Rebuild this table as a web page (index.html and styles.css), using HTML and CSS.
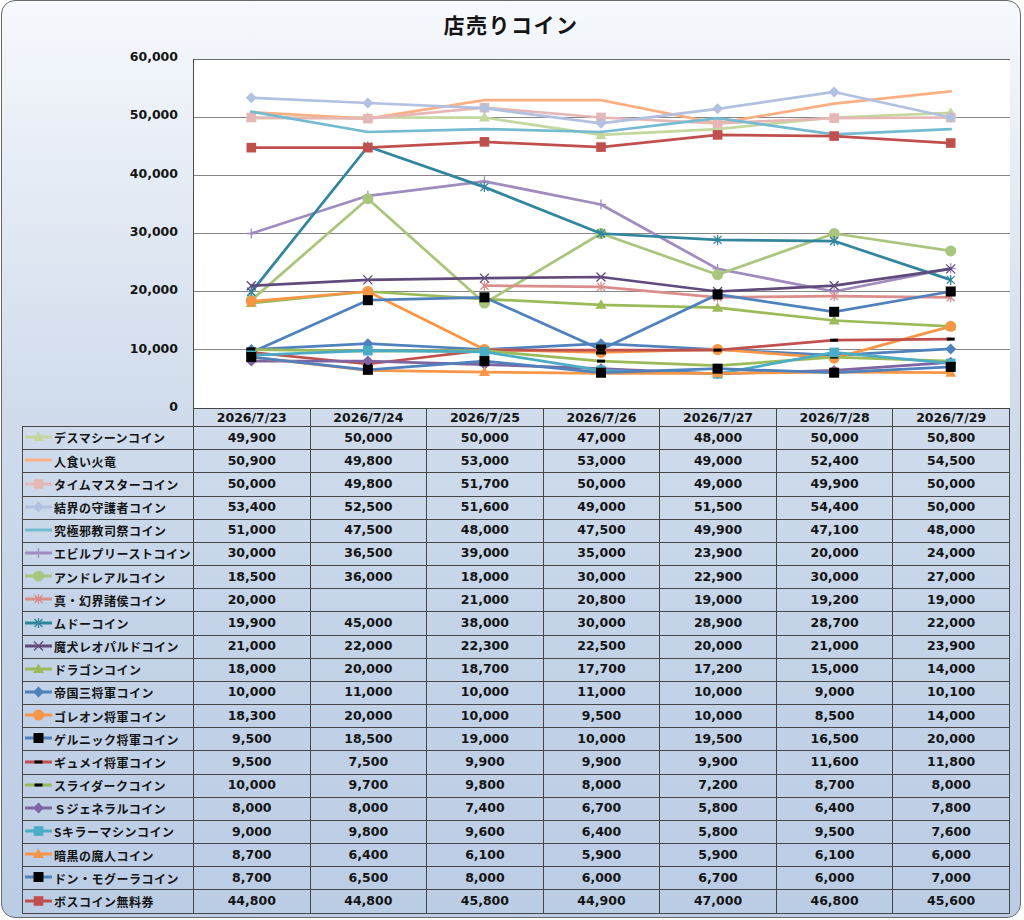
FILE: index.html
```html
<!DOCTYPE html>
<html lang="ja">
<head>
<meta charset="utf-8">
<title>店売りコイン</title>
<link rel="stylesheet" href="styles.css">
</head>
<body>
<div class="frame">
  <h1 class="title">店売りコイン</h1>
  <div class="chart-row">
    <div class="yaxis">
      <span>60,000</span><span>50,000</span><span>40,000</span><span>30,000</span><span>20,000</span><span>10,000</span><span>0</span>
    </div>
    <svg class="plot" id="plot" width="817" height="349" viewBox="0 0 817 349"></svg>
  </div>
  <table class="data">
    <colgroup><col class="c-label"><col><col><col><col><col><col><col></colgroup>
    <thead>
      <tr><th class="corner"></th><th>2026/7/23</th><th>2026/7/24</th><th>2026/7/25</th><th>2026/7/26</th><th>2026/7/27</th><th>2026/7/28</th><th>2026/7/29</th></tr>
    </thead>
    <tbody>
      <tr><th class="name"><svg class="key" data-i="0" width="27" height="12"></svg><span>デスマシーンコイン</span></th><td>49,900</td><td>50,000</td><td>50,000</td><td>47,000</td><td>48,000</td><td>50,000</td><td>50,800</td></tr>
      <tr><th class="name"><svg class="key" data-i="1" width="27" height="12"></svg><span>人食い火竜</span></th><td>50,900</td><td>49,800</td><td>53,000</td><td>53,000</td><td>49,000</td><td>52,400</td><td>54,500</td></tr>
      <tr><th class="name"><svg class="key" data-i="2" width="27" height="12"></svg><span>タイムマスターコイン</span></th><td>50,000</td><td>49,800</td><td>51,700</td><td>50,000</td><td>49,000</td><td>49,900</td><td>50,000</td></tr>
      <tr><th class="name"><svg class="key" data-i="3" width="27" height="12"></svg><span>結界の守護者コイン</span></th><td>53,400</td><td>52,500</td><td>51,600</td><td>49,000</td><td>51,500</td><td>54,400</td><td>50,000</td></tr>
      <tr><th class="name"><svg class="key" data-i="4" width="27" height="12"></svg><span>究極邪教司祭コイン</span></th><td>51,000</td><td>47,500</td><td>48,000</td><td>47,500</td><td>49,900</td><td>47,100</td><td>48,000</td></tr>
      <tr><th class="name"><svg class="key" data-i="5" width="27" height="12"></svg><span>エビルプリーストコイン</span></th><td>30,000</td><td>36,500</td><td>39,000</td><td>35,000</td><td>23,900</td><td>20,000</td><td>24,000</td></tr>
      <tr><th class="name"><svg class="key" data-i="6" width="27" height="12"></svg><span>アンドレアルコイン</span></th><td>18,500</td><td>36,000</td><td>18,000</td><td>30,000</td><td>22,900</td><td>30,000</td><td>27,000</td></tr>
      <tr><th class="name"><svg class="key" data-i="7" width="27" height="12"></svg><span>真・幻界諸侯コイン</span></th><td>20,000</td><td></td><td>21,000</td><td>20,800</td><td>19,000</td><td>19,200</td><td>19,000</td></tr>
      <tr><th class="name"><svg class="key" data-i="8" width="27" height="12"></svg><span>ムドーコイン</span></th><td>19,900</td><td>45,000</td><td>38,000</td><td>30,000</td><td>28,900</td><td>28,700</td><td>22,000</td></tr>
      <tr><th class="name"><svg class="key" data-i="9" width="27" height="12"></svg><span>魔犬レオパルドコイン</span></th><td>21,000</td><td>22,000</td><td>22,300</td><td>22,500</td><td>20,000</td><td>21,000</td><td>23,900</td></tr>
      <tr><th class="name"><svg class="key" data-i="10" width="27" height="12"></svg><span>ドラゴンコイン</span></th><td>18,000</td><td>20,000</td><td>18,700</td><td>17,700</td><td>17,200</td><td>15,000</td><td>14,000</td></tr>
      <tr><th class="name"><svg class="key" data-i="11" width="27" height="12"></svg><span>帝国三将軍コイン</span></th><td>10,000</td><td>11,000</td><td>10,000</td><td>11,000</td><td>10,000</td><td>9,000</td><td>10,100</td></tr>
      <tr><th class="name"><svg class="key" data-i="12" width="27" height="12"></svg><span>ゴレオン将軍コイン</span></th><td>18,300</td><td>20,000</td><td>10,000</td><td>9,500</td><td>10,000</td><td>8,500</td><td>14,000</td></tr>
      <tr><th class="name"><svg class="key" data-i="13" width="27" height="12"></svg><span>ゲルニック将軍コイン</span></th><td>9,500</td><td>18,500</td><td>19,000</td><td>10,000</td><td>19,500</td><td>16,500</td><td>20,000</td></tr>
      <tr><th class="name"><svg class="key" data-i="14" width="27" height="12"></svg><span>ギュメイ将軍コイン</span></th><td>9,500</td><td>7,500</td><td>9,900</td><td>9,900</td><td>9,900</td><td>11,600</td><td>11,800</td></tr>
      <tr><th class="name"><svg class="key" data-i="15" width="27" height="12"></svg><span>スライダークコイン</span></th><td>10,000</td><td>9,700</td><td>9,800</td><td>8,000</td><td>7,200</td><td>8,700</td><td>8,000</td></tr>
      <tr><th class="name"><svg class="key" data-i="16" width="27" height="12"></svg><span>Ｓジェネラルコイン</span></th><td>8,000</td><td>8,000</td><td>7,400</td><td>6,700</td><td>5,800</td><td>6,400</td><td>7,800</td></tr>
      <tr><th class="name"><svg class="key" data-i="17" width="27" height="12"></svg><span>Sキラーマシンコイン</span></th><td>9,000</td><td>9,800</td><td>9,600</td><td>6,400</td><td>5,800</td><td>9,500</td><td>7,600</td></tr>
      <tr><th class="name"><svg class="key" data-i="18" width="27" height="12"></svg><span>暗黒の魔人コイン</span></th><td>8,700</td><td>6,400</td><td>6,100</td><td>5,900</td><td>5,900</td><td>6,100</td><td>6,000</td></tr>
      <tr><th class="name"><svg class="key" data-i="19" width="27" height="12"></svg><span>ドン・モグーラコイン</span></th><td>8,700</td><td>6,500</td><td>8,000</td><td>6,000</td><td>6,700</td><td>6,000</td><td>7,000</td></tr>
      <tr><th class="name"><svg class="key" data-i="20" width="27" height="12"></svg><span>ボスコイン無料券</span></th><td>44,800</td><td>44,800</td><td>45,800</td><td>44,900</td><td>47,000</td><td>46,800</td><td>45,600</td></tr>
    </tbody>
  </table>
</div>
<script src="script.js"></script>
</body>
</html>
```

FILE: styles.css
```css
html, body {
  margin: 0;
  padding: 0;
  background: #ffffff;
}

.frame {
  box-sizing: border-box;
  width: 1020px;
  height: 918px;
  margin-left: 1px;
  border: 1px solid #6a6a6a;
  border-radius: 14px;
  background: linear-gradient(180deg, #f6f9fd 0%, #e3eaf4 22%, #d0dcec 45%, #c3d3e8 70%, #bbcde5 100%);
  font-family: "DejaVu Sans", "Noto Sans CJK JP", sans-serif;
  color: #141414;
}

.title {
  margin: 0;
  height: 48px;
  line-height: 47px;
  text-align: center;
  font-family: "Noto Sans CJK JP", sans-serif;
  font-size: 21px;
  font-weight: 700;
  letter-spacing: 1.5px;
  color: #141414;
}

.chart-row {
  display: flex;
  height: 359px;
}

.yaxis {
  box-sizing: border-box;
  width: 191px;
  height: 366px;
  flex: none;
  padding-right: 15px;
  display: flex;
  flex-direction: column;
  justify-content: space-between;
  align-items: flex-end;
  font-size: 12.5px;
  font-weight: 700;
  line-height: 16px;
}

.plot {
  flex: none;
  margin-top: 10px;
  background: #ffffff;
  display: block;
}

.data {
  margin-left: 20px;
  width: 988px;
  table-layout: fixed;
  border-collapse: collapse;
  font-size: 12.5px;
  font-weight: 700;
}

.c-label {
  width: 171px;
}

.data th,
.data td {
  border: 1px solid #474747;
  padding: 0;
  text-align: center;
  white-space: nowrap;
  overflow: hidden;
}

.data tbody td,
.data tbody th {
  padding-bottom: 2px;
}

.data thead tr {
  height: 18px;
}

.data thead th {
  line-height: 16px;
}

.data tbody tr {
  height: 23.18px;
}

.data th.corner {
  border: none;
}

.data th.name {
  text-align: left;
  padding-left: 2px;
  font-family: "Noto Sans CJK JP", sans-serif;
  font-size: 12px;
  letter-spacing: 0.5px;
}

.name .key {
  display: inline-block;
  vertical-align: middle;
  margin-right: 2px;
  margin-top: -2px;
}

.name span {
  vertical-align: middle;
}
```

FILE: script.js
```javascript
const SERIES = [
  { c: '#c4d79d', m: 'tri',  d: [49900, 50000, 50000, 47000, 48000, 50000, 50800] },
  { c: '#fbb084', m: null,   d: [50900, 49800, 53000, 53000, 49000, 52400, 54500] },
  { c: '#e5b8b7', m: 'sq',   d: [50000, 49800, 51700, 50000, 49000, 49900, 50000] },
  { c: '#b2c1df', m: 'dia',  d: [53400, 52500, 51600, 49000, 51500, 54400, 50000] },
  { c: '#74bad1', m: null,   d: [51000, 47500, 48000, 47500, 49900, 47100, 48000] },
  { c: '#a18cbf', m: 'plus', d: [30000, 36500, 39000, 35000, 23900, 20000, 24000] },
  { c: '#aac57d', m: 'circ', d: [18500, 36000, 18000, 30000, 22900, 30000, 27000] },
  { c: '#d98e8c', m: 'star', d: [20000, null, 21000, 20800, 19000, 19200, 19000] },
  { c: '#31859c', m: 'star', d: [19900, 45000, 38000, 30000, 28900, 28700, 22000] },
  { c: '#604a7b', m: 'x',    d: [21000, 22000, 22300, 22500, 20000, 21000, 23900] },
  { c: '#9bbb59', m: 'tri',  d: [18000, 20000, 18700, 17700, 17200, 15000, 14000] },
  { c: '#4f81bd', m: 'dia',  d: [10000, 11000, 10000, 11000, 10000, 9000, 10100] },
  { c: '#f79646', m: 'circ', d: [18300, 20000, 10000, 9500, 10000, 8500, 14000] },
  { c: '#4f81bd', m: 'bsq',  d: [9500, 18500, 19000, 10000, 19500, 16500, 20000] },
  { c: '#c0504d', m: 'dash', d: [9500, 7500, 9900, 9900, 9900, 11600, 11800] },
  { c: '#9bbb59', m: 'dash', d: [10000, 9700, 9800, 8000, 7200, 8700, 8000] },
  { c: '#8064a2', m: 'dia',  d: [8000, 8000, 7400, 6700, 5800, 6400, 7800] },
  { c: '#4bacc6', m: 'sq',   d: [9000, 9800, 9600, 6400, 5800, 9500, 7600] },
  { c: '#f79646', m: 'tri',  d: [8700, 6400, 6100, 5900, 5900, 6100, 6000] },
  { c: '#4f81bd', m: 'bsq',  d: [8700, 6500, 8000, 6000, 6700, 6000, 7000] },
  { c: '#c0504d', m: 'sq',   d: [44800, 44800, 45800, 44900, 47000, 46800, 45600] }
];

const X0 = 58.3;
const DX = 116.57;
const px = i => X0 + i * DX;
const py = v => 0.5 + (60000 - v) * 0.0058;

function marker(type, x, y, c) {
  const f = n => n.toFixed(2);
  switch (type) {
    case 'tri':
      return `<polygon points="${f(x)},${f(y - 5.5)} ${f(x + 5.5)},${f(y + 4)} ${f(x - 5.5)},${f(y + 4)}" fill="${c}"/>`;
    case 'sq':
      return `<rect x="${f(x - 4.8)}" y="${f(y - 4.8)}" width="9.6" height="9.6" fill="${c}"/>`;
    case 'dia':
      return `<polygon points="${f(x)},${f(y - 5.5)} ${f(x + 5.5)},${f(y)} ${f(x)},${f(y + 5.5)} ${f(x - 5.5)},${f(y)}" fill="${c}"/>`;
    case 'plus':
      return `<path d="M${f(x - 5)} ${f(y)}H${f(x + 5)}M${f(x)} ${f(y - 5)}V${f(y + 5)}" stroke="${c}" stroke-width="1.3" fill="none"/>`;
    case 'circ':
      return `<circle cx="${f(x)}" cy="${f(y)}" r="5.5" fill="${c}"/>`;
    case 'star':
      return `<path d="M${f(x - 4)} ${f(y - 4)}L${f(x + 4)} ${f(y + 4)}M${f(x + 4)} ${f(y - 4)}L${f(x - 4)} ${f(y + 4)}M${f(x)} ${f(y - 5)}V${f(y + 5)}" stroke="${c}" stroke-width="1.3" fill="none"/>`;
    case 'x':
      return `<path d="M${f(x - 4.5)} ${f(y - 4.5)}L${f(x + 4.5)} ${f(y + 4.5)}M${f(x + 4.5)} ${f(y - 4.5)}L${f(x - 4.5)} ${f(y + 4.5)}" stroke="${c}" stroke-width="1.3" fill="none"/>`;
    case 'bsq':
      return `<rect x="${f(x - 5)}" y="${f(y - 5)}" width="10" height="10" fill="#000"/>`;
    case 'dash':
      return `<rect x="${f(x - 4)}" y="${f(y - 1.5)}" width="8" height="3" fill="#000"/>`;
    default:
      return '';
  }
}

function drawPlot() {
  const svg = document.getElementById('plot');
  let out = '';
  for (let k = 1; k <= 5; k++) {
    const y = Math.round(py(k * 10000) - 0.5) + 0.5;
    out += `<line x1="0" x2="817" y1="${y}" y2="${y}" stroke="#858585" stroke-width="1"/>`;
  }
  out += `<line x1="0" x2="817" y1="0.5" y2="0.5" stroke="#6a6a6a" stroke-width="1"/>`;
  out += `<line x1="0.5" x2="0.5" y1="0" y2="349" stroke="#4a4a4a" stroke-width="1"/>`;

  SERIES.forEach(s => {
    let seg = [];
    const segs = [];
    s.d.forEach((v, i) => {
      if (v === null) {
        if (seg.length) segs.push(seg);
        seg = [];
      } else {
        seg.push(`${px(i).toFixed(2)},${py(v).toFixed(2)}`);
      }
    });
    if (seg.length) segs.push(seg);
    segs.forEach(p => {
      if (p.length > 1) {
        out += `<polyline points="${p.join(' ')}" fill="none" stroke="${s.c}" stroke-width="2.75" stroke-linejoin="round" stroke-linecap="round"/>`;
      }
    });
    if (s.m) {
      s.d.forEach((v, i) => {
        if (v !== null) out += marker(s.m, px(i), py(v), s.c);
      });
    }
  });
  svg.innerHTML = out;
}

function drawKeys() {
  document.querySelectorAll('svg.key').forEach(el => {
    const s = SERIES[+el.dataset.i];
    let out = `<line x1="0" x2="27" y1="6" y2="6" stroke="${s.c}" stroke-width="3"/>`;
    if (s.m) out += marker(s.m, 13.5, 6, s.c);
    el.innerHTML = out;
  });
}

drawPlot();
drawKeys();
```
